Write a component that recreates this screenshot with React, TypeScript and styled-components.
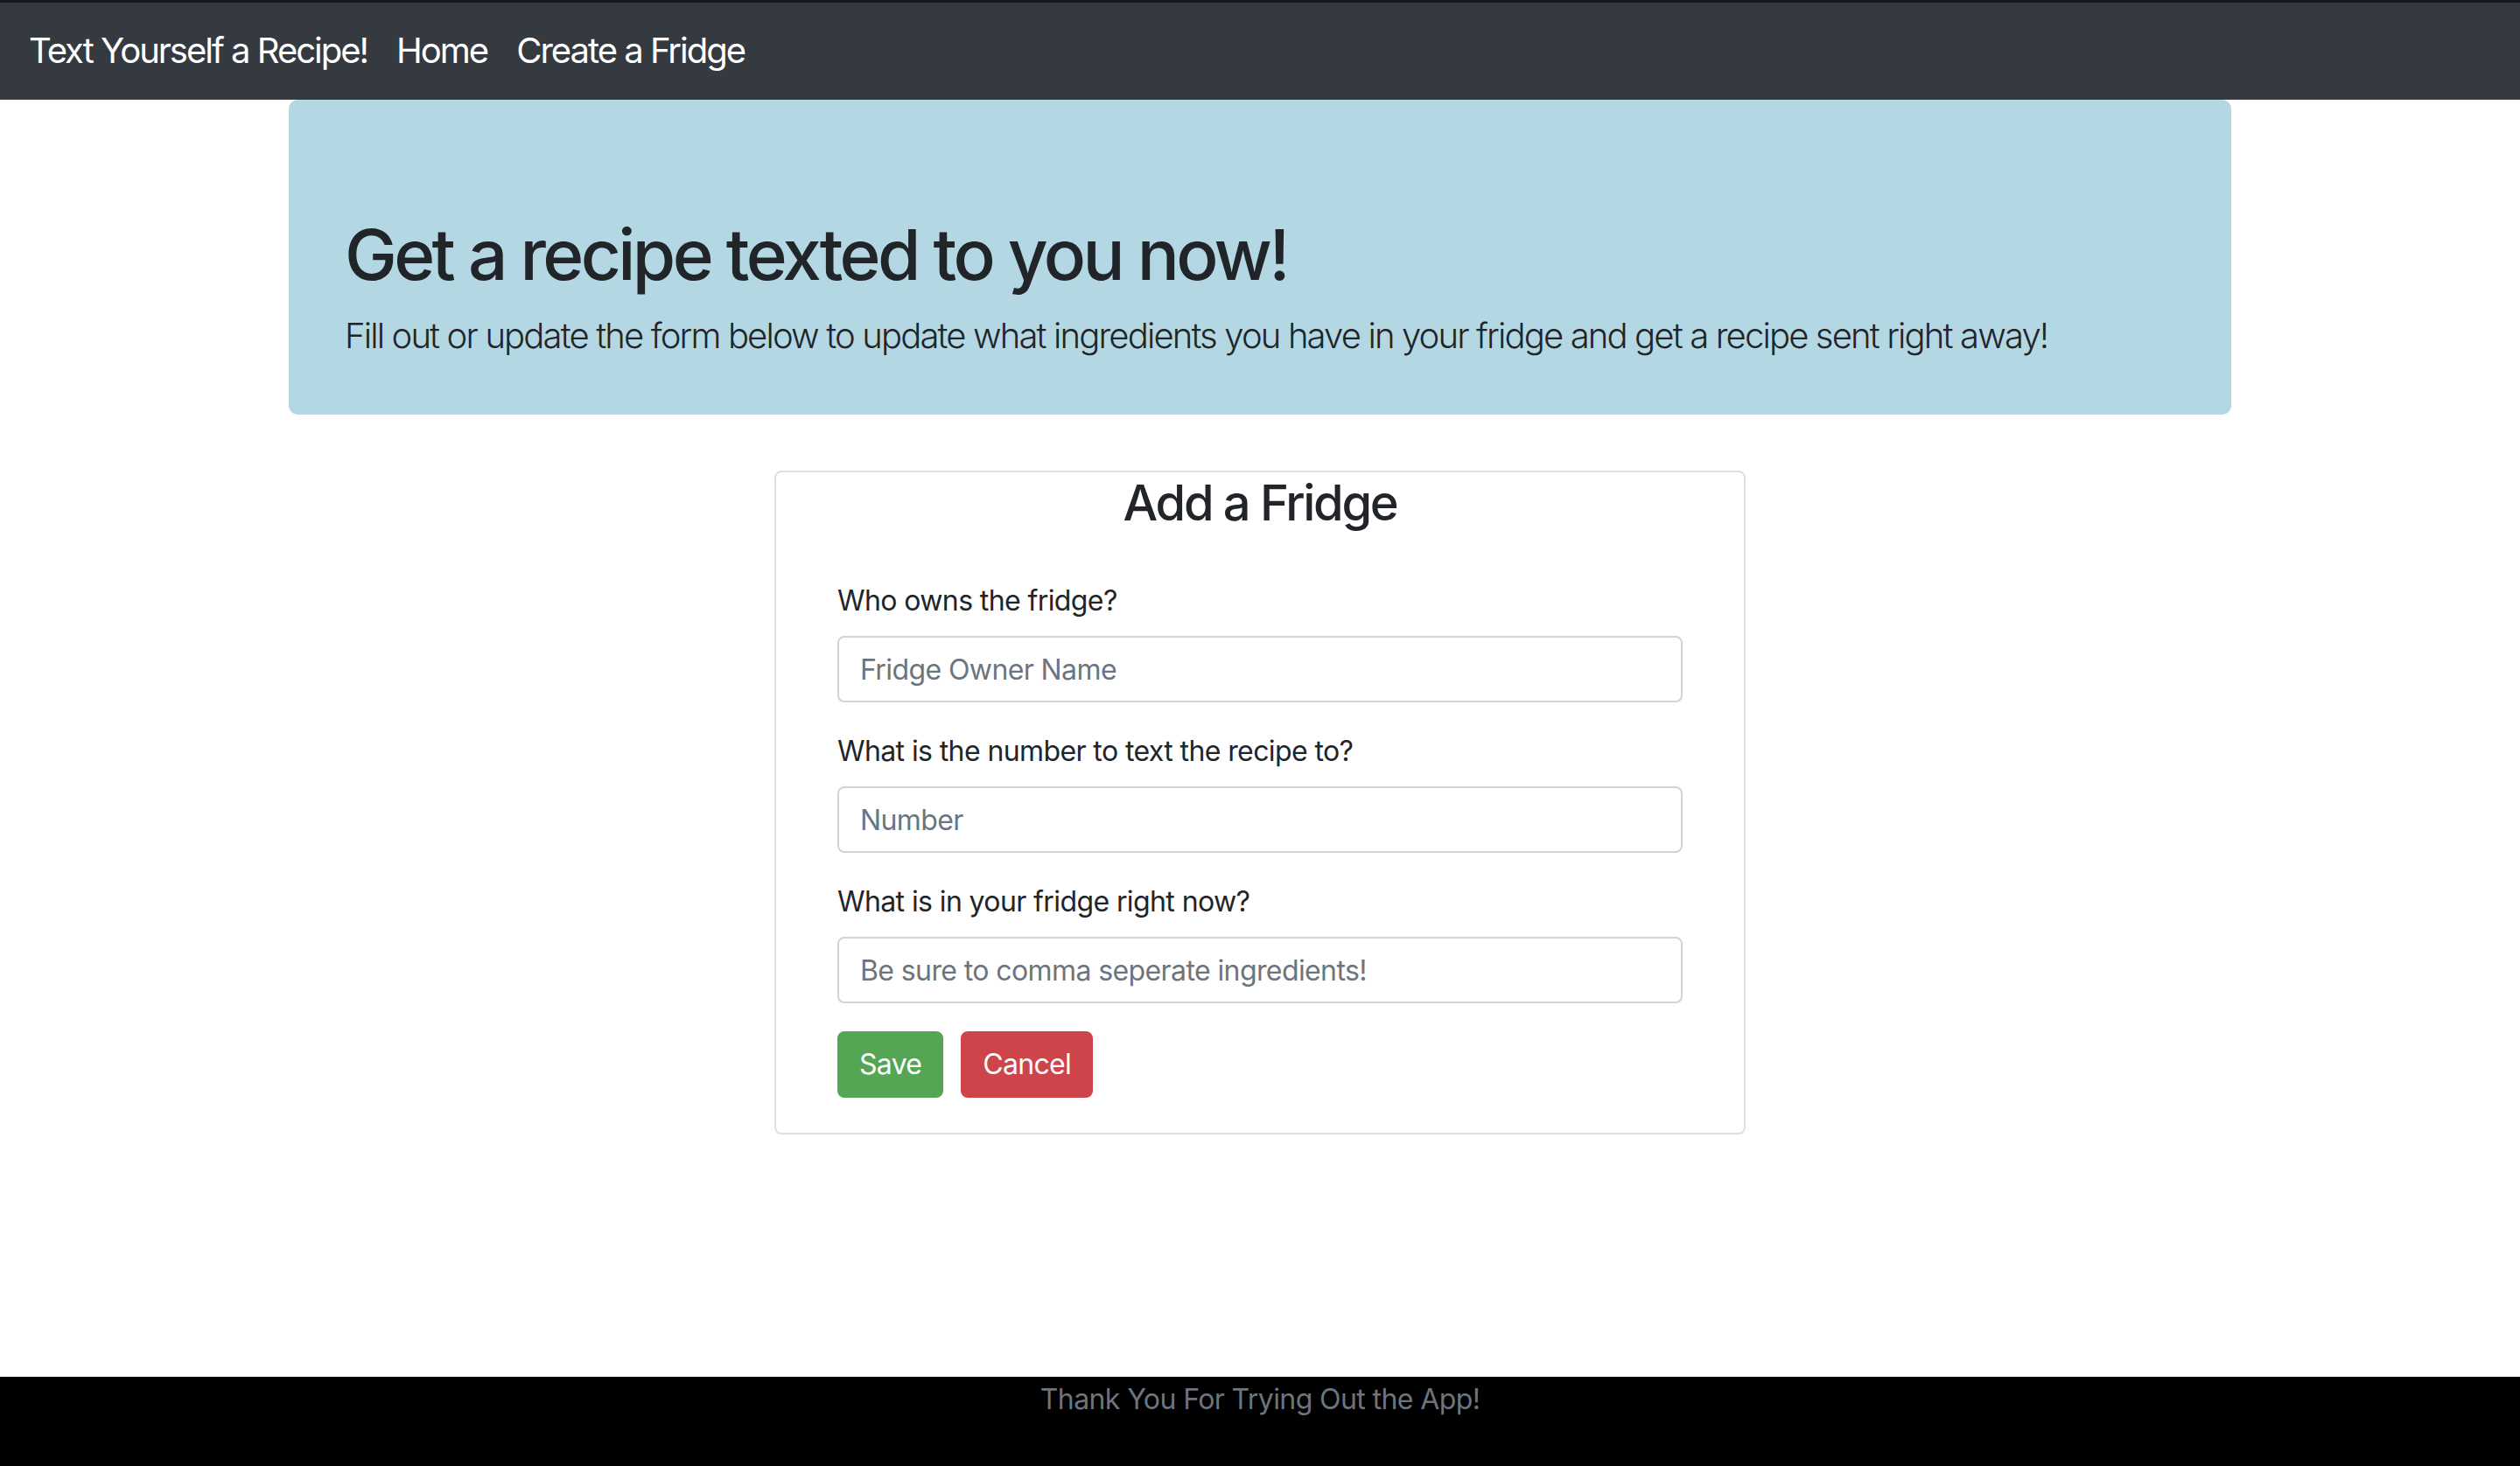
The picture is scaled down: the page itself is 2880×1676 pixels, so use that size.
import React from "react";
import styled, { createGlobalStyle } from "styled-components";

const GlobalStyle = createGlobalStyle`
  html, body {
    margin: 0;
    padding: 0;
    background: #ffffff;
  }
  body {
    font-family: Inter, "Noto Sans", "Liberation Sans", sans-serif;
    color: #212529;
  }
  * { box-sizing: border-box; }
`;

const Page = styled.div`
  min-height: 100vh;
  display: flex;
  flex-direction: column;
`;

const Navbar = styled.nav`
  height: 114px;
  background: #343a40;
  border-top: 3px solid #16181b;
  display: flex;
  align-items: center;
  gap: 33px;
  padding: 0 32px 2px 33px;
`;

const NavLink = styled.a`
  color: #ffffff;
  font-size: 40px;
  line-height: 60px;
  text-decoration: none;
  letter-spacing: -2px;
`;

const Container = styled.main`
  width: 2220px;
  margin: 0 auto;
  display: flex;
  flex-direction: column;
`;

const Jumbotron = styled.section`
  background: #b4d8e3;
  border-radius: 10px;
  padding: 129px 64px 60px;
  margin-bottom: 64px;
`;

const Title = styled.h1`
  font-size: 80px;
  font-weight: 500;
  line-height: 96px;
  margin: 0 0 15px;
  letter-spacing: -3.6px;
`;

const Lead = styled.p`
  font-size: 40px;
  font-weight: 300;
  line-height: 60px;
  margin: 0;
  letter-spacing: -1.85px;
`;

const Card = styled.div`
  width: 1110px;
  margin: 0 auto;
  border: 2px solid #dfdfdf;
  border-radius: 8px;
  padding: 2px 70px 40px;
`;

const CardTitle = styled.h3`
  font-size: 56px;
  font-weight: 500;
  line-height: 67px;
  text-align: center;
  margin: 0 0 54px;
  letter-spacing: -2.3px;
`;

const FormGroup = styled.div`
  margin-bottom: 32px;
`;

const Label = styled.label`
  display: block;
  font-size: 32px;
  line-height: 48px;
  margin-bottom: 16px;
  letter-spacing: -0.6px;
`;

const Input = styled.input`
  display: block;
  width: 100%;
  height: 76px;
  border: 2px solid #ced4da;
  border-radius: 8px;
  padding: 0 24px;
  font-family: inherit;
  font-size: 32px;
  letter-spacing: -0.6px;
  color: #495057;
  background: #ffffff;
  outline: none;
  &::placeholder {
    color: #6c757d;
  }
`;

const ButtonRow = styled.div`
  display: flex;
  gap: 20px;
`;

const Button = styled.button<{ $variant: "save" | "cancel" }>`
  height: 76px;
  padding: 0 23px;
  border: 2px solid ${(p) => (p.$variant === "save" ? "#54a654" : "#cd454b")};
  background: ${(p) => (p.$variant === "save" ? "#54a654" : "#cd454b")};
  color: #ffffff;
  font-family: inherit;
  font-size: 32px;
  line-height: 48px;
  letter-spacing: -0.7px;
  border-radius: 8px;
  cursor: pointer;
`;

const Footer = styled.footer`
  margin-top: auto;
  height: 102px;
  background: #000000;
  color: #6c757d;
  font-size: 32px;
  line-height: 48px;
  letter-spacing: -0.6px;
  text-align: center;
  padding-top: 2px;
`;

export default function App() {
  return (
    <>
      <GlobalStyle />
      <Page>
        <Navbar>
          <NavLink href="#">Text Yourself a Recipe!</NavLink>
          <NavLink href="#">Home</NavLink>
          <NavLink href="#">Create a Fridge</NavLink>
        </Navbar>
        <Container>
          <Jumbotron>
            <Title>Get a recipe texted to you now!</Title>
            <Lead>
              Fill out or update the form below to update what ingredients you have in your fridge and get a recipe sent right away!
            </Lead>
          </Jumbotron>
          <Card>
            <CardTitle>Add a Fridge</CardTitle>
            <FormGroup>
              <Label>Who owns the fridge?</Label>
              <Input placeholder="Fridge Owner Name" />
            </FormGroup>
            <FormGroup>
              <Label>What is the number to text the recipe to?</Label>
              <Input placeholder="Number" />
            </FormGroup>
            <FormGroup>
              <Label>What is in your fridge right now?</Label>
              <Input placeholder="Be sure to comma seperate ingredients!" />
            </FormGroup>
            <ButtonRow>
              <Button $variant="save">Save</Button>
              <Button $variant="cancel">Cancel</Button>
            </ButtonRow>
          </Card>
        </Container>
        <Footer>Thank You For Trying Out the App!</Footer>
      </Page>
    </>
  );
}
